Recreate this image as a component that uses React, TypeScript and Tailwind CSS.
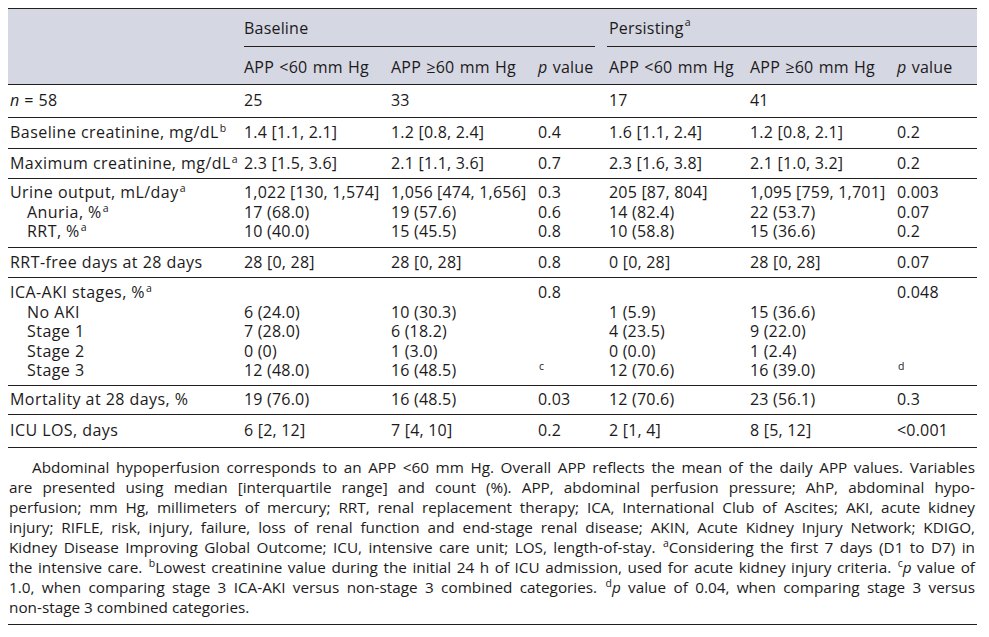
import React from 'react';

const cols = 'grid grid-cols-[234px_147px_147px_71px_141px_147px_82px]';

type Line = { label: React.ReactNode; indent?: boolean; vals: React.ReactNode[] };
type Row = { cls: string; lines: Line[] };

const Sup: React.FC<{ children: React.ReactNode }> = ({ children }) => (
    <sup className="text-[10.5px] top-[-6px] ml-[1px] tracking-normal">{children}</sup>
);

const rows: Row[] = [
    {
        cls: 'h-[33px] justify-center',
        lines: [{ label: <><i>n</i> = 58</>, vals: ['25', '33', '', '17', '41', ''] }],
    },
    {
        cls: 'h-[31px] justify-center',
        lines: [{ label: <>Baseline creatinine, mg/dL<Sup>b</Sup></>, vals: ['1.4 [1.1, 2.1]', '1.2 [0.8, 2.4]', '0.4', '1.6 [1.1, 2.4]', '1.2 [0.8, 2.1]', '0.2'] }],
    },
    {
        cls: 'h-[30px] justify-center',
        lines: [{ label: <>Maximum creatinine, mg/dL<Sup>a</Sup></>, vals: ['2.3 [1.5, 3.6]', '2.1 [1.1, 3.6]', '0.7', '2.3 [1.6, 3.8]', '2.1 [1.0, 3.2]', '0.2'] }],
    },
    {
        cls: 'h-[69px] pt-[4.25px]',
        lines: [
            { label: <>Urine output, mL/day<Sup>a</Sup></>, vals: ['1,022 [130, 1,574]', '1,056 [474, 1,656]', '0.3', '205 [87, 804]', '1,095 [759, 1,701]', '0.003'] },
            { label: <>Anuria, %<Sup>a</Sup></>, indent: true, vals: ['17 (68.0)', '19 (57.6)', '0.6', '14 (82.4)', '22 (53.7)', '0.07'] },
            { label: <>RRT, %<Sup>a</Sup></>, indent: true, vals: ['10 (40.0)', '15 (45.5)', '0.8', '10 (58.8)', '15 (36.6)', '0.2'] },
        ],
    },
    {
        cls: 'h-[30px] justify-center',
        lines: [{ label: 'RRT-free days at 28 days', vals: ['28 [0, 28]', '28 [0, 28]', '0.8', '0 [0, 28]', '28 [0, 28]', '0.07'] }],
    },
    {
        cls: 'h-[108px] pt-[5.25px]',
        lines: [
            { label: <>ICA-AKI stages, %<Sup>a</Sup></>, vals: ['', '', '0.8', '', '', '0.048'] },
            { label: 'No AKI', indent: true, vals: ['6 (24.0)', '10 (30.3)', '', '1 (5.9)', '15 (36.6)', ''] },
            { label: 'Stage 1', indent: true, vals: ['7 (28.0)', '6 (18.2)', '', '4 (23.5)', '9 (22.0)', ''] },
            { label: 'Stage 2', indent: true, vals: ['0 (0)', '1 (3.0)', '', '0 (0.0)', '1 (2.4)', ''] },
            { label: 'Stage 3', indent: true, vals: ['12 (48.0)', '16 (48.5)', <Sup>c</Sup>, '12 (70.6)', '16 (39.0)', <Sup>d</Sup>] },
        ],
    },
    {
        cls: 'h-[29px] justify-center',
        lines: [{ label: 'Mortality at 28 days, %', vals: ['19 (76.0)', '16 (48.5)', '0.03', '12 (70.6)', '23 (56.1)', '0.3'] }],
    },
    {
        cls: 'h-[33px] justify-center',
        lines: [{ label: 'ICU LOS, days', vals: ['6 [2, 12]', '7 [4, 10]', '0.2', '2 [1, 4]', '8 [5, 12]', '<0.001'] }],
    },
];

const notes: React.ReactNode[] = [
    'Abdominal hypoperfusion corresponds to an APP <60 mm Hg. Overall APP reflects the mean of the daily APP values. Variables',
    'are presented using median [interquartile range] and count (%). APP, abdominal perfusion pressure; AhP, abdominal hypo-',
    'perfusion; mm Hg, millimeters of mercury; RRT, renal replacement therapy; ICA, International Club of Ascites; AKI, acute kidney',
    'injury; RIFLE, risk, injury, failure, loss of renal function and end-stage renal disease; AKIN, Acute Kidney Injury Network; KDIGO,',
    <>Kidney Disease Improving Global Outcome; ICU, intensive care unit; LOS, length-of-stay. <Sup>a</Sup>Considering the first 7 days (D1 to D7) in</>,
    <>the intensive care. <Sup>b</Sup>Lowest creatinine value during the initial 24 h of ICU admission, used for acute kidney injury criteria. <Sup>c</Sup><i>p</i> value of</>,
    <>1.0, when comparing stage 3 ICA-AKI versus non-stage 3 combined categories. <Sup>d</Sup><i>p</i> value of 0.04, when comparing stage 3 versus</>,
];

const App: React.FC = () => {
    return (
        <div className="min-h-screen bg-white p-[8px] font-['Open_Sans','Noto_Sans',sans-serif] text-[16px] text-[#1c1a1b]">
            <div className="w-[969px]">
                {/* header */}
                <div className="bg-[#d5d7e3] border-t border-[#231f20] tracking-[0.2px] [word-spacing:1px]">
                    <div className={`${cols} h-[38px]`}>
                        <div />
                        <div className="col-span-3 flex items-center ml-[2px] mr-[12px] border-b border-[#231f20]">Baseline</div>
                        <div className="col-span-3 flex items-center pl-[2px] border-b border-[#231f20]">
                            Persisting<Sup>a</Sup>
                        </div>
                    </div>
                    <div className={`${cols} h-[38px] items-center pt-[3px] border-b border-[#231f20]`}>
                        <div />
                        <div className="pl-[2px]">APP &lt;60 mm Hg</div>
                        <div className="pl-[2px]">APP ≥60 mm Hg</div>
                        <div className="pl-[2px] whitespace-nowrap"><i>p</i> value</div>
                        <div className="pl-[2px]">APP &lt;60 mm Hg</div>
                        <div className="pl-[2px]">APP ≥60 mm Hg</div>
                        <div className="pl-[2px]"><i>p</i> value</div>
                    </div>
                </div>

                {/* body */}
                {rows.map((row, i) => (
                    <div key={i} className={`flex flex-col border-b border-[#231f20] ${row.cls}`}>
                        {row.lines.map((line, j) => (
                            <div key={j} className={`${cols} h-[19.5px] items-center leading-[19.5px]`}>
                                <div className={`whitespace-nowrap tracking-[0.45px] ${line.indent ? 'pl-[19px]' : 'pl-[2px]'}`}>
                                    {line.label}
                                </div>
                                {line.vals.map((v, k) => (
                                    <div key={k} className="pl-[2px] whitespace-nowrap tracking-[0.2px]">{v}</div>
                                ))}
                            </div>
                        ))}
                    </div>
                ))}

                {/* footnote */}
                <div className="h-[177px] border-b border-[#231f20] pt-[9px] text-[15.3px] leading-[20px]">
                    {notes.map((n, i) => (
                        <div
                            key={i}
                            className={`text-justify [text-align-last:justify] pr-[2px] ${i === 0 ? 'pl-[24px]' : 'pl-[1px]'}`}
                        >
                            {n}
                        </div>
                    ))}
                    <div className="pl-[1px]">non-stage 3 combined categories.</div>
                </div>
            </div>
        </div>
    );
};

export default App;
